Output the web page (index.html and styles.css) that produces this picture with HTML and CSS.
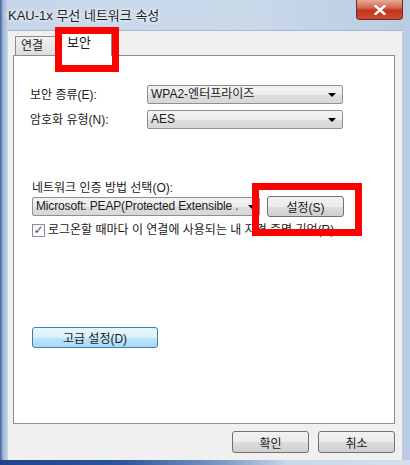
FILE: index.html
```html
<!DOCTYPE html>
<html lang="ko">
<head>
    <meta charset="UTF-8">
    <title>KAU-1x 무선 네트워크 속성</title>
    <link rel="stylesheet" href="styles.css">
</head>
<body>
    <div class="window">
        <!-- Title bar -->
        <div class="titlebar">
            <span class="title">KAU-1x 무선 네트워크 속성</span>
            <button class="close-btn" aria-label="닫기">
                <svg width="12" height="10" viewBox="0 0 12 10">
                    <path d="M1.5 1 L10.5 9 M10.5 1 L1.5 9" stroke="#fff" stroke-width="2.4" stroke-linecap="square"/>
                </svg>
            </button>
        </div>

        <!-- Client area -->
        <div class="client">
            <div class="tabs">
                <div class="tab">연결</div>
                <div class="tab active">보안</div>
            </div>

            <div class="tab-panel">
                <div class="field-row">
                    <span class="field-label">보안 종류(E):</span>
                    <div class="combo"><span class="combo-text">WPA2-엔터프라이즈</span><span class="arrow"></span></div>
                </div>
                <div class="field-row">
                    <span class="field-label">암호화 유형(N):</span>
                    <div class="combo"><span class="combo-text">AES</span><span class="arrow"></span></div>
                </div>

                <div class="auth-label">네트워크 인증 방법 선택(O):</div>
                <div class="auth-row">
                    <div class="combo combo-auth"><span class="combo-text">Microsoft: PEAP(Protected Extensible .</span><span class="arrow"></span></div>
                    <button class="btn btn-settings">설정(S)</button>
                </div>
                <div class="check-row">
                    <span class="checkbox">✓</span>
                    <span>로그온할 때마다 이 연결에 사용되는 내 자격 증명 기억(R)</span>
                </div>

                <button class="btn btn-default">고급 설정(D)</button>
            </div>

            <div class="dialog-buttons">
                <button class="btn btn-dialog">확인</button>
                <button class="btn btn-dialog">취소</button>
            </div>
        </div>

        <!-- Red highlight marks -->
        <div class="mark mark-tab"></div>
        <div class="mark mark-btn"></div>
    </div>
</body>
</html>
```

FILE: styles.css
```css
body {
    margin: 0;
    padding: 0;
    font-family: 'Liberation Sans', 'Noto Sans CJK KR', sans-serif;
    font-size: 12px;
    color: #1a1a1a;
    background-color: #fff;
}

.window {
    position: relative;
    width: 410px;
    height: 465px;
    box-sizing: border-box;
    padding: 0 8px 5px 8px;
    display: flex;
    flex-direction: column;
    background: linear-gradient(to right, #3d5f97 0, #9fb6d4 3px, #c6d5e8 8px, #cad9ea 60%, #b9cce3 100%);
    overflow: hidden;
}

.window::after {
    content: '';
    position: absolute;
    left: 0;
    right: 0;
    bottom: 0;
    height: 5px;
    background: linear-gradient(to right, #1f4489 0, #2f5697 30%, #7e9cc6 55%, #c9d7e8 70%, #d6e0ec 100%);
}

.titlebar {
    height: 30px;
    display: flex;
    align-items: flex-start;
}

.title {
    font-size: 13px;
    line-height: 16px;
    margin-top: 8px;
    color: #1b1b1b;
    text-shadow: 0 0 6px #fff, 0 0 3px #fff;
}

.close-btn {
    margin-left: auto;
    margin-right: -1px;
    width: 47px;
    height: 20px;
    padding: 0;
    border: 1px solid #6b2a2a;
    border-top: none;
    border-radius: 0 0 4px 4px;
    background: linear-gradient(to bottom, #e9a99a 0, #d2694f 40%, #c0331c 55%, #d14a30 100%);
    display: flex;
    align-items: center;
    justify-content: center;
}

.client {
    flex: 1;
    background-color: #f0f0f0;
    padding: 0 7px 0 5px;
    display: flex;
    flex-direction: column;
    border-top: 1px solid #a8b8cc;
}

.tabs {
    height: 24px;
    display: flex;
    align-items: flex-end;
    padding-left: 2px;
}

.tab {
    height: 18px;
    line-height: 18px;
    padding: 0 8px 0 5px;
    width: 28px;
    border: 1px solid #898c95;
    border-bottom: none;
    background: linear-gradient(to bottom, #f2f2f2, #dcdcdc);
    font-size: 12px;
}

.tab.active {
    height: 24px;
    line-height: 22px;
    width: 44px;
    padding: 0 0 0 9px;
    margin-left: -1px;
    margin-bottom: -1px;
    background: #fff;
    font-size: 13px;
    position: relative;
    z-index: 1;
}

.tab-panel {
    flex: 1;
    background: #fff;
    border: 1px solid #898c95;
    padding: 29px 0 0 18px;
    display: flex;
    flex-direction: column;
    align-items: flex-start;
}

.field-row {
    display: flex;
    align-items: center;
    height: 19px;
    margin-left: -2px;
}

.field-row + .field-row {
    margin-top: 6px;
}

.field-label {
    width: 117px;
    line-height: 14px;
}

.combo {
    width: 196px;
    height: 19px;
    box-sizing: border-box;
    border: 1px solid #8e8f8f;
    border-radius: 2px;
    background: linear-gradient(to bottom, #f4f4f4 0, #ebebeb 50%, #dddddd 51%, #d8d8d8 100%);
    display: flex;
    align-items: center;
    padding: 0 6px 0 3px;
}

.combo-text {
    flex: 1;
    white-space: nowrap;
    line-height: 15px;
}

.arrow {
    width: 0;
    height: 0;
    border-left: 4px solid transparent;
    border-right: 4px solid transparent;
    border-top: 4px solid #000;
    margin-left: 4px;
}

.auth-label {
    margin-top: 52px;
    line-height: 14px;
}

.auth-row {
    margin-top: 1px;
    display: flex;
    align-items: center;
    gap: 7px;
}

.combo-auth {
    width: 228px;
    padding-right: 3px;
}

.combo-auth .combo-text {
    letter-spacing: -0.15px;
}

.combo-auth .arrow {
    margin-left: 1px;
}

.btn {
    font-family: 'Liberation Sans', 'Noto Sans CJK KR', sans-serif;
    font-size: 12px;
    color: #1a1a1a;
    height: 21px;
    padding: 0;
    border: 1px solid #707070;
    border-radius: 3px;
    background: linear-gradient(to bottom, #f2f2f2 0, #ebebeb 50%, #dddddd 51%, #cfcfcf 100%);
}

.btn-settings {
    width: 77px;
}

.check-row {
    margin-top: 5px;
    display: flex;
    align-items: center;
    gap: 3px;
    line-height: 16px;
    height: 16px;
}

.checkbox {
    width: 13px;
    height: 13px;
    box-sizing: border-box;
    border: 1px solid #8e8f8f;
    background: linear-gradient(to bottom, #f4f4f4, #fff);
    color: #3b5493;
    font-size: 12px;
    line-height: 11px;
    text-align: center;
    font-weight: bold;
    font-family: 'DejaVu Sans', sans-serif;
}

.btn-default {
    margin-top: 89px;
    width: 126px;
    border-color: #3c7fb1;
    background: linear-gradient(to bottom, #eaf6fd 0, #d9f0fc 50%, #bee6fd 51%, #a7d9f5 100%);
}

.dialog-buttons {
    height: 36px;
    display: flex;
    justify-content: flex-end;
    align-items: flex-start;
    gap: 9px;
    padding-top: 7px;
    box-sizing: border-box;
}

.btn-dialog {
    width: 77px;
    height: 22px;
}

.mark {
    position: absolute;
    border: 7px solid #ff0000;
    box-sizing: border-box;
    z-index: 5;
}

.mark-tab {
    left: 55px;
    top: 27px;
    width: 64px;
    height: 45px;
}

.mark-btn {
    left: 252px;
    top: 183px;
    width: 110px;
    height: 53px;
}
```
